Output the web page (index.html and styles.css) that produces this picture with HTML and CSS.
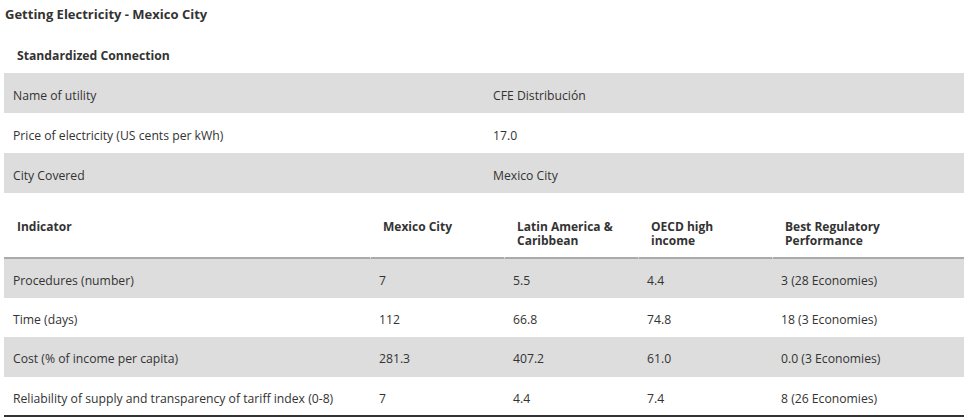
FILE: index.html
```html
<!DOCTYPE html>
<html>
<head>
<meta charset="utf-8">
<link rel="stylesheet" href="styles.css">
</head>
<body>
<div class="page">
  <h1 class="title">Getting Electricity - Mexico City</h1>
  <table class="info">
    <thead>
      <tr><th colspan="2">Standardized Connection</th></tr>
    </thead>
    <tbody>
      <tr class="alt"><td>Name of utility</td><td>CFE Distribución</td></tr>
      <tr><td>Price of electricity (US cents per kWh)</td><td>17.0</td></tr>
      <tr class="alt"><td>City Covered</td><td>Mexico City</td></tr>
    </tbody>
  </table>
  <table class="indicators">
    <colgroup>
      <col class="c1"><col class="c2"><col class="c3"><col class="c4"><col class="c5">
    </colgroup>
    <thead>
      <tr>
        <th>Indicator</th>
        <th>Mexico City</th>
        <th>Latin America &amp; Caribbean</th>
        <th>OECD high income</th>
        <th>Best Regulatory Performance</th>
      </tr>
    </thead>
    <tbody>
      <tr class="alt"><td>Procedures (number)</td><td>7</td><td>5.5</td><td>4.4</td><td>3 (28 Economies)</td></tr>
      <tr><td>Time (days)</td><td>112</td><td>66.8</td><td>74.8</td><td>18 (3 Economies)</td></tr>
      <tr class="alt tall"><td>Cost (% of income per capita)</td><td>281.3</td><td>407.2</td><td>61.0</td><td>0.0 (3 Economies)</td></tr>
      <tr class="last"><td>Reliability of supply and transparency of tariff index (0-8)</td><td>7</td><td>4.4</td><td>7.4</td><td>8 (26 Economies)</td></tr>
    </tbody>
  </table>
</div>
</body>
</html>
```

FILE: styles.css
```css
html, body {
  margin: 0;
  padding: 0;
  background: #fff;
}

body {
  font-family: "Open Sans", "DejaVu Sans", sans-serif;
  color: #333;
  font-size: 12.2px;
}

.page {
  padding: 0 5px 0 4px;
  width: 960px;
}

.title {
  margin: 0;
  padding: 5px 0 0 1px;
  height: 30px;
  box-sizing: border-box;
  font-size: 13px;
  line-height: 19px;
  font-weight: 700;
}

table {
  width: 960px;
  border-collapse: collapse;
  border-spacing: 0;
  table-layout: fixed;
}

.info th {
  text-align: left;
  font-weight: 700;
  font-size: 12.2px;
  height: 43px;
  box-sizing: border-box;
  padding: 8px 13px 0;
  line-height: 17px;
  vertical-align: middle;
}

.info td {
  height: 40px;
  box-sizing: border-box;
  padding: 14px 9px 0;
  width: 50%;
  vertical-align: top;
  line-height: 17px;
}

.alt td {
  background: #dddddd;
}

.indicators {
  border-collapse: separate;
}

.indicators .c1 { width: 366px; }
.indicators .c2 { width: 134px; }
.indicators .c3 { width: 134px; }
.indicators .c4 { width: 134px; }
.indicators .c5 { width: 192px; }

.indicators th {
  text-align: left;
  vertical-align: top;
  font-weight: 700;
  font-size: 12px;
  line-height: 14px;
  padding: 27px 13px 9px;
  border-bottom: 2px solid #aaaaaa;
}

.indicators th + th {
  border-left: 1px solid #fff;
  padding-left: 12px;
}

.indicators td {
  height: 39px;
  box-sizing: border-box;
  padding: 13px 9px 0;
  vertical-align: top;
  line-height: 17px;
}

.indicators .tall td {
  height: 40px;
}

.indicators .last td {
  height: 40px;
  border-bottom: 2px solid #333;
}
```
